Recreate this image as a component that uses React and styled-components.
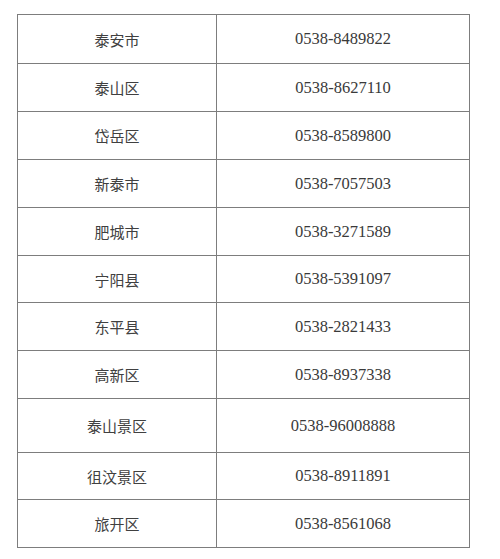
import styled, { createGlobalStyle } from "styled-components";

const GlobalStyle = createGlobalStyle`
  html, body {
    margin: 0;
    padding: 0;
    background: #ffffff;
  }
`;

const Page = styled.div`
  padding: 14px 0 0 17px;
`;

const Table = styled.table`
  border-collapse: collapse;
  width: 453px;
  table-layout: fixed;
  border: 1px solid #7d7d7d;
`;

const Row = styled.tr`
  height: ${(p) => p.$h}px;
`;

const NameCell = styled.td`
  width: 198px;
  border: 1px solid #7d7d7d;
  padding: 0;
  text-align: center;
  vertical-align: middle;
  font-family: "Noto Sans CJK SC", "Noto Sans", sans-serif;
  font-size: 15px;
  color: #404040;
`;

const PhoneCell = styled.td`
  border: 1px solid #7d7d7d;
  padding: 0;
  text-align: center;
  vertical-align: middle;
  font-family: "Liberation Serif", serif;
  font-size: 16.5px;
  color: #3a3a3a;
`;

const rows = [
  ["泰安市", "0538-8489822", 49],
  ["泰山区", "0538-8627110", 48],
  ["岱岳区", "0538-8589800", 48],
  ["新泰市", "0538-7057503", 48],
  ["肥城市", "0538-3271589", 48],
  ["宁阳县", "0538-5391097", 47],
  ["东平县", "0538-2821433", 48],
  ["高新区", "0538-8937338", 48],
  ["泰山景区", "0538-96008888", 54],
  ["徂汶景区", "0538-8911891", 47],
  ["旅开区", "0538-8561068", 48],
];

export default function App() {
  return (
    <>
      <GlobalStyle />
      <Page>
        <Table>
          <tbody>
            {rows.map(([name, phone, h]) => (
              <Row key={name} $h={h}>
                <NameCell>{name}</NameCell>
                <PhoneCell>{phone}</PhoneCell>
              </Row>
            ))}
          </tbody>
        </Table>
      </Page>
    </>
  );
}
